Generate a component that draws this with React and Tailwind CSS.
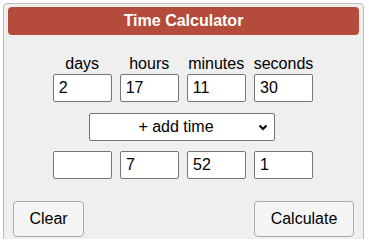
const rowOne = [
  { label: "days", value: "2" },
  { label: "hours", value: "17" },
  { label: "minutes", value: "11" },
  { label: "seconds", value: "30" },
];

const rowTwo = ["", "7", "52", "1"];

const Field = ({ value }) => (
  <input
    type="text"
    defaultValue={value}
    className="w-[59px] h-[28px] border border-[#767676] rounded-[2px] bg-white px-[5px] text-[16px] text-black outline-none"
  />
);

const App = () => {
  return (
    <div className="w-[369px] h-[239px] overflow-hidden bg-white pt-[3px] pl-[3px] font-['Liberation_Sans',Arial,sans-serif]">
      <div className="w-[361px] h-[260px] border border-[#bcbcbc] rounded-t-[4px] bg-[#efefef] px-[4px] pt-[3px]">
        <div className="h-[28px] rounded-[4px] bg-[#b54b3a] flex items-center justify-center text-white font-bold text-[16px]">
          Time Calculator
        </div>

        <div className="mt-[20px] flex justify-center gap-[8px] pr-[1px]">
          {rowOne.map((f) => (
            <div key={f.label} className="flex flex-col items-center">
              <span className="text-[16px] leading-[18px] text-black whitespace-nowrap">
                {f.label}
              </span>
              <div className="mt-[1px]">
                <Field value={f.value} />
              </div>
            </div>
          ))}
        </div>

        <div className="mt-[11px] flex justify-center pr-[3px]">
          <div className="relative w-[186px] h-[28px]">
            <select className="appearance-none w-full h-full border border-[#767676] rounded-[2px] bg-white text-[16px] text-black text-center pr-[12px] outline-none">
              <option>+ add time</option>
              <option>- subtract time</option>
            </select>
            <svg
              className="absolute right-[7px] top-[11px] pointer-events-none"
              width="10"
              height="7"
              viewBox="0 0 10 7"
            >
              <path d="M1.5 1.5 L5 5 L8.5 1.5" fill="none" stroke="#000" strokeWidth="2" />
            </svg>
          </div>
        </div>

        <div className="mt-[10px] flex justify-center gap-[8px] pr-[1px]">
          {rowTwo.map((v, i) => (
            <Field key={i} value={v} />
          ))}
        </div>

        <div className="mt-[22px] flex justify-between pl-[5px] pr-[5px]">
          <button className="w-[71px] h-[36px] border border-[#ababab] rounded-[4px] bg-[#f5f5f5] text-[16px] text-black">
            Clear
          </button>
          <button className="w-[100px] h-[36px] border border-[#ababab] rounded-[4px] bg-[#f5f5f5] text-[16px] text-black">
            Calculate
          </button>
        </div>
      </div>
    </div>
  );
};

export default App;
